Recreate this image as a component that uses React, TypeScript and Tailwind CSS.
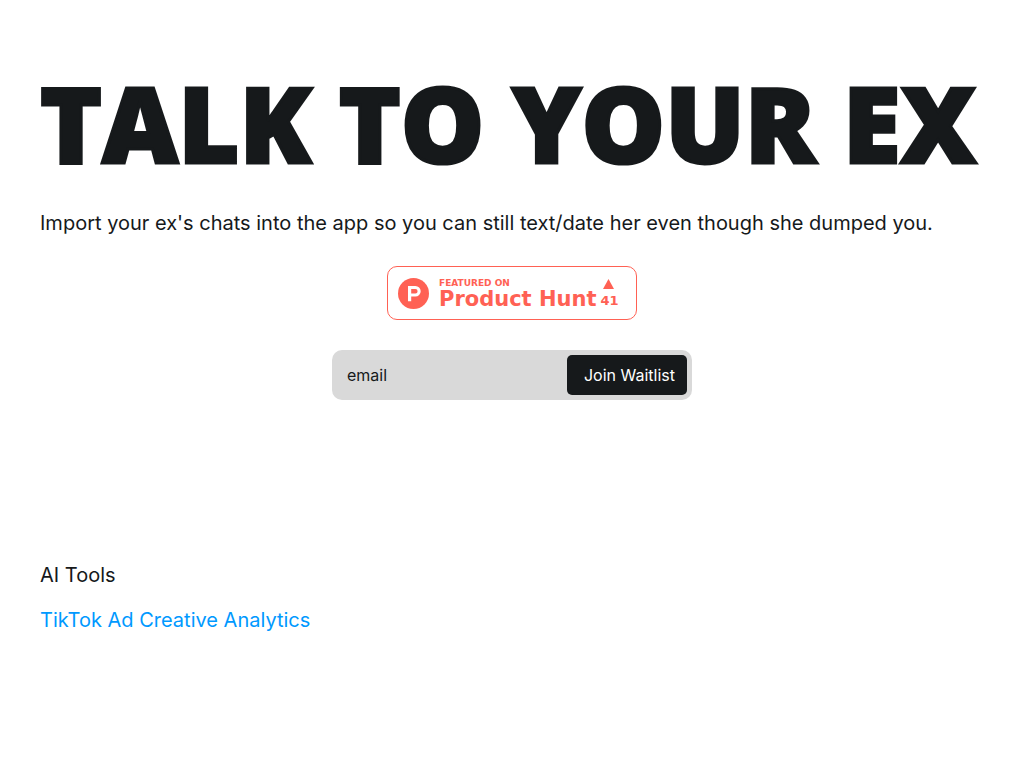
function ProductHuntBadge() {
  return (
    <a
      href="#product-hunt"
      className="flex h-[54px] w-[250px] items-center rounded-[10px] border border-[#ff6154] bg-white pl-[10px] font-['DejaVu_Sans',sans-serif] font-bold text-[#ff6154]"
    >
      <svg className="size-[31px] shrink-0" viewBox="0 0 31 31" aria-hidden="true">
        <circle cx="15.5" cy="15.5" r="15.5" fill="#ff6154" />
        <path
          fillRule="evenodd"
          fill="#fff"
          d="M10 8h7.4a5.3 5.3 0 0 1 0 10.6h-4.2V23.3H10V8Zm3.2 3.1v4.4h4.2a2.2 2.2 0 0 0 0-4.4h-4.2Z"
        />
      </svg>
      <span className="ml-[10px] flex flex-col pt-0.5 whitespace-nowrap">
        <span className="text-[9px] leading-[10px]">FEATURED ON</span>
        <span className="text-[21px] leading-[22px]">Product Hunt</span>
      </span>
      <span className="ml-1 flex flex-col items-start pt-0.5">
        <svg className="ml-0.5 h-[10px] w-3" viewBox="0 0 12 10" aria-hidden="true">
          <path d="M6.5 0L12 10H1z" fill="#ff6154" />
        </svg>
        <span className="mt-1 text-[13px] leading-4">41</span>
      </span>
    </a>
  );
}

export default function App() {
  return (
    <main className="flex flex-col px-10 pt-[66px] pb-10 font-['Inter','Liberation_Sans',sans-serif] text-xl text-[#16191b]">
      <h1 className="font-['Open_Sans','Noto_Sans',sans-serif] text-[105px] leading-[114px] font-black whitespace-nowrap [-webkit-text-stroke:3px_#16191b]">
        TALK TO YOUR EX
      </h1>
      <p className="mt-7 leading-[30px]">
        Import your ex's chats into the app so you can still text/date her even though she dumped you.
      </p>
      <div className="mt-7 flex justify-center">
        <ProductHuntBadge />
      </div>
      <form
        className="mt-[30px] flex w-[360px] max-w-full self-center rounded-[10px] bg-[#d9d9d9] p-[5px] text-base"
        onSubmit={(e) => e.preventDefault()}
      >
        <input
          type="email"
          aria-label="email"
          placeholder="email"
          className="h-10 min-w-0 flex-1 bg-transparent px-[10px] outline-none placeholder:text-[#16191b]"
        />
        <button type="submit" className="h-10 w-[120px] rounded-[5px] bg-[#16191b] pl-[5px] whitespace-nowrap text-white">
          Join Waitlist
        </button>
      </form>
      <footer className="mt-40 flex flex-col gap-[15px] leading-[30px]">
        <p>AI Tools</p>
        <a href="#analytics" className="self-start text-[#0099ff]">
          TikTok Ad Creative Analytics
        </a>
      </footer>
    </main>
  );
}
